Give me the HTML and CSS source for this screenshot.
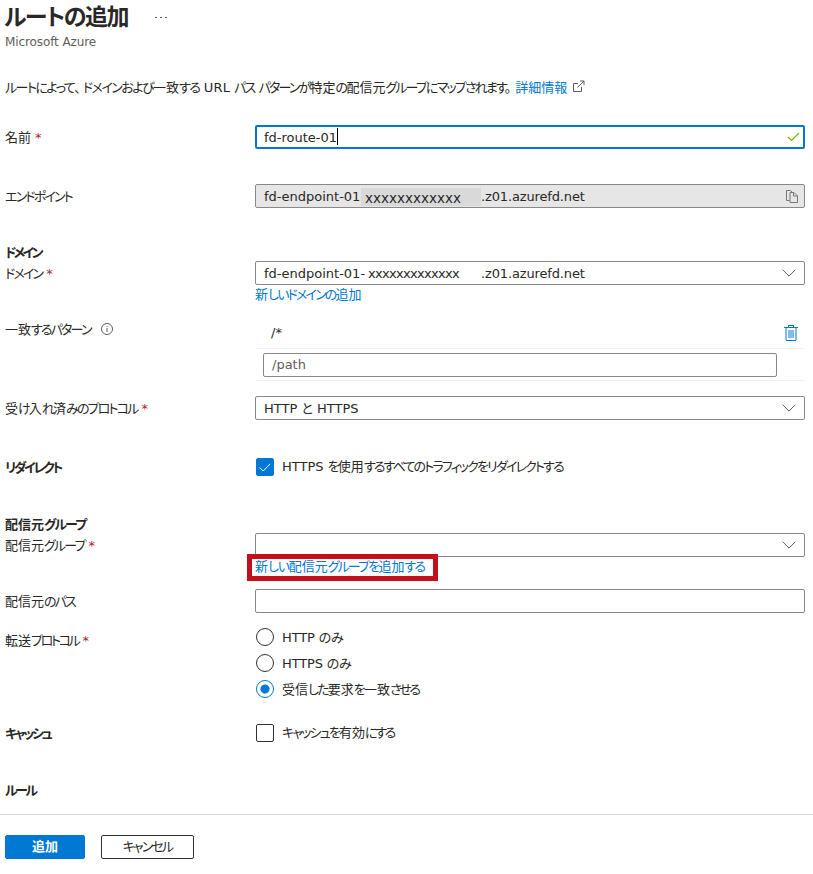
FILE: index.html
```html
<!DOCTYPE html>
<html lang="ja">
<head>
<meta charset="utf-8">
<title>ルートの追加</title>
<link rel="stylesheet" href="styles.css">
</head>
<body>
<header class="head">
  <div class="title-line"><h1>ルートの追加</h1><svg class="more" viewBox="0 0 13 3"><path d="M0 1h2v1H0zM5 1h2v1H5zM10 1h2v1h-2z"/></svg></div>
  <p class="subtitle">Microsoft Azure</p>
</header>
<p class="intro"><span class="k">ルートによって<span class="comma">、</span>ドメインおよび</span>一致<span class="ki">する</span><span class="url">URL</span><span class="kt">パス<span class="gap"> </span>パターンが</span>特定<span class="k">の</span>配信元<span class="kt">グループにマップされます。</span><a class="more-info">詳細情報</a><svg class="ext" viewBox="0 0 13 13"><path d="M6 3.5H1.5v8h8V7M8 1h4v4M12 1 5.5 7.5"/></svg></p>
<main>
  <div class="row name">
    <label>名前<b class="req">*</b></label>
    <div class="box focus">fd-route-01<span class="caret"></span><svg class="ok" viewBox="0 0 13 10"><path d="M.8 4.8 4.5 8.5 12 1"/></svg></div>
  </div>
  <div class="row endpoint">
    <label class="kt">エンドポイント</label>
    <div class="box readonly">fd-endpoint-01-<span class="mask">xxxxxxxxxxxx</span><span class="host">.z01.azurefd.net</span><svg class="copy" viewBox="0 0 12 13"><path d="M3.5 10.5h-3V.5h4l1.500 1.500M4 2.500h4L11.500 6v6.500H4zM7.500 2.500V6h4"/></svg></div>
  </div>
  <h2 class="h-domain kx">ドメイン</h2>
  <div class="row domain">
    <label><span class="kt">ドメイン</span><b class="req">*</b></label>
    <div>
      <div class="box">fd-endpoint-01-<span class="mask plain">xxxxxxxxxxxxx</span><span class="host">.z01.azurefd.net</span><svg class="chev" viewBox="0 0 14 8"><path d="m.7.8 6.300 6.300L13.300.8"/></svg></div>
      <a class="below">新<span class="kt">しいドメインの</span>追加</a>
    </div>
  </div>
  <div class="row pattern">
    <label>一致<span class="kt">するパターン</span><svg class="info" viewBox="0 0 12 12"><circle cx="6" cy="6" r="5.500"/><path d="M6 5v4M6 3v1"/></svg></label>
    <div class="paths">
      <div class="path-item">/*<svg class="trash" viewBox="0 0 14 16"><path class="soft" d="M1 3h2v12H1zM11 3h2v12h-2zM4 5h6v8H4z"/><path d="M0 2h14v1H0zM4 0h6v2H9V1H5v1H4zM2 15h10v1H2z"/></svg></div>
      <div class="path-new"><div class="box ghost">/path</div></div>
    </div>
  </div>
  <div class="row protocols">
    <label>受<span class="kt">け</span>入<span class="kt">れ</span>済<span class="kt">みのプロトコル</span><b class="req">*</b></label>
    <div class="box">HTTP と HTTPS<svg class="chev" viewBox="0 0 14 8"><path d="m.7.8 6.300 6.300L13.300.8"/></svg></div>
  </div>
  <div class="row redirect">
    <h2 class="kx">リダイレクト</h2>
    <div class="option"><span class="check on"><svg viewBox="0 0 12 9"><path d="m.7 4.500 3.500 3.500L11.300.8"/></svg></span><span>HTTPS <span class="kt">を</span>使用<span class="kt">するすべてのトラフィックをリダイレクトする</span></span></div>
  </div>
  <h2 class="h-origin">配信元<span class="kt">グループ</span></h2>
  <div class="row origin">
    <label>配信元<span class="kt">グループ</span><b class="req">*</b></label>
    <div class="anchor">
      <div class="box"><svg class="chev" viewBox="0 0 14 8"><path d="m.7.8 6.300 6.300L13.300.8"/></svg></div>
      <a class="below">新<span class="ki">しい</span>配信元<span class="kt">グループを</span>追加<span class="kt">する</span></a>
      <span class="highlight"></span>
    </div>
  </div>
  <div class="row origin-path">
    <label>配信元<span class="kt">のパス</span></label>
    <div class="box"></div>
  </div>
  <div class="row forward">
    <label>転送<span class="kx">プロトコル</span><b class="req">*</b></label>
    <div class="radios">
      <div class="option"><span class="radio"></span><span class="host">HTTP のみ</span></div>
      <div class="option"><span class="radio"></span><span class="host">HTTPS のみ</span></div>
      <div class="option"><span class="radio on"></span><span>受信<span class="kt">した</span>要求<span class="kt">を</span>一致<span class="kx">させる</span></span></div>
    </div>
  </div>
  <div class="row cache">
    <h2 class="kx">キャッシュ</h2>
    <div class="option"><span class="check"></span><span><span class="kt">キャッシュを</span>有効<span class="kx">にする</span></span></div>
  </div>
  <h2 class="h-rules kx">ルール</h2>
</main>
<footer>
  <button class="primary">追加</button>
  <button class="kt">キャンセル</button>
</footer>
</body>
</html>
```
FILE: styles.css
```css
* { box-sizing: border-box; }
body {
  margin: 0;
  height: 874px;
  overflow: hidden;
  background: #fff;
  color: #292827;
  font: 13px/24px "DejaVu Sans", "Noto Sans CJK JP", sans-serif;
  font-feature-settings: "palt";
  white-space: nowrap;
}
h1, h2, p { margin: 0; }
svg { display: block; fill: none; stroke: #605e5c; flex: none; }
a { color: #0078d4; }

/* Kana is set tighter than kanji and Latin */
.ki { letter-spacing: -1.3px; }
.k { letter-spacing: -1.55px; }
.kt { letter-spacing: -1.85px; }
.kx { letter-spacing: -2.35px; }

.head { height: 75px; padding-left: 5px; }
.title-line { display: flex; height: 34px; }
h1 { width: 150px; margin-left: -1px; font-size: 23px; line-height: 35px; letter-spacing: -1.4px; font-weight: 700; }
.more { width: 13px; height: 3px; margin: 16px 0 0 1px; fill: #605e5c; stroke: none; }
.subtitle { font-size: 12px; line-height: 16px; letter-spacing: -.1px; color: #605e5c; }
.intro { display: flex; height: 24px; padding-left: 5px; line-height: 26px; white-space: pre; }
.comma { letter-spacing: 2px; }
.gap { letter-spacing: 0; }
.url { margin: 0 4px; letter-spacing: .2px; }
.more-info { margin-left: 6px; }
.ext { width: 13px; height: 13px; margin: 5px 0 0 5px; }

.row { display: grid; grid-template-columns: 250px 550px; padding-left: 5px; align-items: start; }
label { display: flex; height: 24px; line-height: 26px; }
.req { margin-left: 4px; color: #a4262c; font-weight: 400; letter-spacing: 0; }
h2 { height: 18px; font-size: 13px; line-height: 19px; font-weight: 700; }

.box {
  position: relative;
  display: flex;
  height: 24px;
  padding: 0 8px;
  border: 1px solid #8a8886;
  border-radius: 2px;
  line-height: 24px;
  background: #fff;
}
.box svg { margin-left: auto; }
.focus { border: 2px solid #0078d4; padding: 0 7px; line-height: 22px; }
.caret { width: 1px; height: 17px; margin-top: 1px; background: #000; }
.box .ok { width: 13px; height: 10px; margin-top: 5px; margin-right: -4px; stroke: #6bb700; stroke-width: 1.1; }
.readonly { background: #e6e6e6; }
.box .copy { width: 12px; height: 13px; margin-top: 5px; margin-right: -2px; stroke: #797775; }
.mask { width: 120px; height: 18px; margin: 3px 0 0 -4px; padding-left: 4px; line-height: 20px; font-size: 13.5px; background: #d9d9d9; }
.plain { width: 116px; margin-left: 0; padding-left: 3px; font-size: 13px; line-height: 18px; letter-spacing: -.7px; background: #fff; }
.host { letter-spacing: -.15px; }
.box .chev { width: 14px; height: 8px; margin-top: 7px; }
.below { display: block; height: 18px; line-height: 20px; }

.name { height: 59px; margin-top: 26px; }
.endpoint { height: 59px; }
.h-domain { padding-left: 5px; letter-spacing: -2.7px; }
.domain { height: 56px; }
.pattern { height: 79px; }
.info { width: 12px; height: 12px; margin: 6px 0 0 10px; }
.path-item { display: flex; justify-content: space-between; height: 32px; padding: 4px 7px 0 16px; border-bottom: 1px solid #f0f0f0; }
.trash { width: 14px; height: 16px; margin-top: 4px; stroke: none; fill: #0078d4; }
.trash .soft { fill: #80bcea; }
.path-new { height: 32px; padding: 4px 28px 0 8px; border-bottom: 1px solid #f0f0f0; }
.ghost { line-height: 22px; color: #605e5c; }
.protocols { height: 62px; }
.redirect { height: 57px; }
.option { display: flex; height: 18px; line-height: 18px; padding-left: 1px; gap: 8px; }
.radios .option { line-height: 19px; }
.check, .radio { width: 18px; height: 18px; flex: none; border: 1px solid #323130; border-radius: 2px; }
.check.on { padding: 4px 0 0 2px; background: #0078d4; border-color: #0078d4; }
.check svg { width: 12px; height: 9px; stroke: #fff; }
.radio { border-radius: 50%; }
.radio.on { border-color: #0078d4; background: radial-gradient(circle, #0078d4 4px, transparent 5px); }
.origin { height: 56px; }
.anchor { position: relative; }
.highlight { position: absolute; left: -8px; top: 21px; width: 191px; height: 27px; border: 5px solid #c50f1a; }
.origin-path { height: 39px; }
.forward { height: 96px; }
.radios { display: grid; gap: 8px; }
.cache { height: 57px; }
.h-rules { height: 33px; padding-left: 5px; }
.h-origin { padding-left: 5px; }

footer { display: flex; gap: 16px; height: 60px; padding: 20px 0 0 5px; border-top: 1px solid #d6d6d6; }
button { width: 93px; height: 24px; padding: 0; font: inherit; line-height: 20px; color: #292827; background: #fff; border: 1px solid #323130; border-radius: 2px; }
button.kt { letter-spacing: -1.85px; }
button.primary { width: 80px; color: #fff; font-weight: 700; background: #0078d4; border-color: #0078d4; }
```
